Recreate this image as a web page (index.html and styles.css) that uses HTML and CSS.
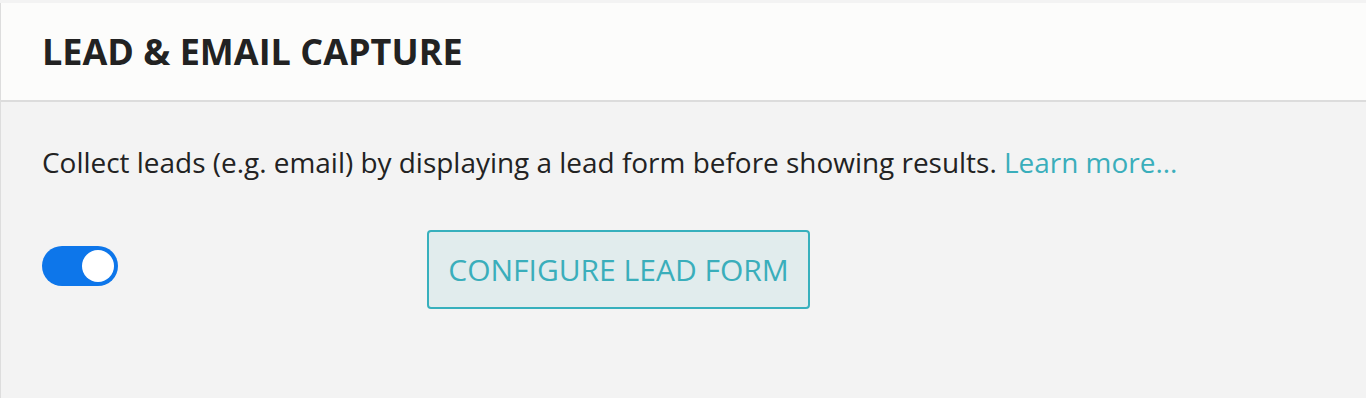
FILE: index.html
```html
<!DOCTYPE html>
<html lang="en">
<head>
    <meta charset="UTF-8">
    <meta name="viewport" content="width=device-width, initial-scale=1.0">
    <title>Lead &amp; Email Capture</title>
    <link rel="stylesheet" href="styles.css">
</head>
<body>
    <div class="panel">
        <div class="panel-header">
            <h2>LEAD &amp; EMAIL CAPTURE</h2>
        </div>
        <div class="panel-body">
            <p class="intro">Collect leads (e.g. email) by displaying a lead form before showing results. <a href="#" class="learn-more">Learn more...</a></p>
            <div class="lead-row">
                <label class="switch">
                    <input type="checkbox" checked>
                    <span class="slider"></span>
                </label>
                <button type="button" class="configure-button">CONFIGURE LEAD FORM</button>
            </div>
        </div>
    </div>
</body>
</html>
```

FILE: styles.css
```css
body {
    margin: 0;
    padding-top: 3px;
    background-color: #f3f3f3;
    font-family: "Open Sans", Arial, sans-serif;
    color: #222;
}
.panel {
    border-left: 1px solid #dddddd;
    min-height: 395px;
}
.panel-header {
    height: 99px;
    display: flex;
    align-items: center;
    padding: 0 41px 1px;
    background-color: #fcfcfb;
    border-bottom: 2px solid #dcdcdc;
    box-sizing: border-box;
}
.panel-header h2 {
    margin: 0;
    font-size: 36px;
    font-weight: 700;
    color: #222;
}
.panel-body {
    padding: 0 41px;
}
.intro {
    margin: 37px 0 0;
    font-size: 27.95px;
    line-height: 46px;
}
.learn-more {
    color: #3aaebb;
    text-decoration: none;
}
.lead-row {
    display: grid;
    grid-template-columns: 385px auto;
    align-items: start;
    margin-top: 45px;
}
.switch {
    position: relative;
    display: inline-block;
    width: 76px;
    height: 40px;
    margin-top: 16px;
}
.switch input {
    display: none;
}
.slider {
    position: absolute;
    inset: 0;
    background-color: #0d76ea;
    border-radius: 20px;
}
.slider:before {
    content: "";
    position: absolute;
    width: 32px;
    height: 32px;
    top: 4px;
    right: 4px;
    background-color: #ffffff;
    border-radius: 50%;
}
.configure-button {
    justify-self: start;
    width: 383px;
    height: 79px;
    background-color: #e1eced;
    border: 2px solid #37b0bd;
    border-radius: 4px;
    color: #3aaebb;
    font-family: "Open Sans", Arial, sans-serif;
    font-size: 30px;
    cursor: pointer;
}
```
